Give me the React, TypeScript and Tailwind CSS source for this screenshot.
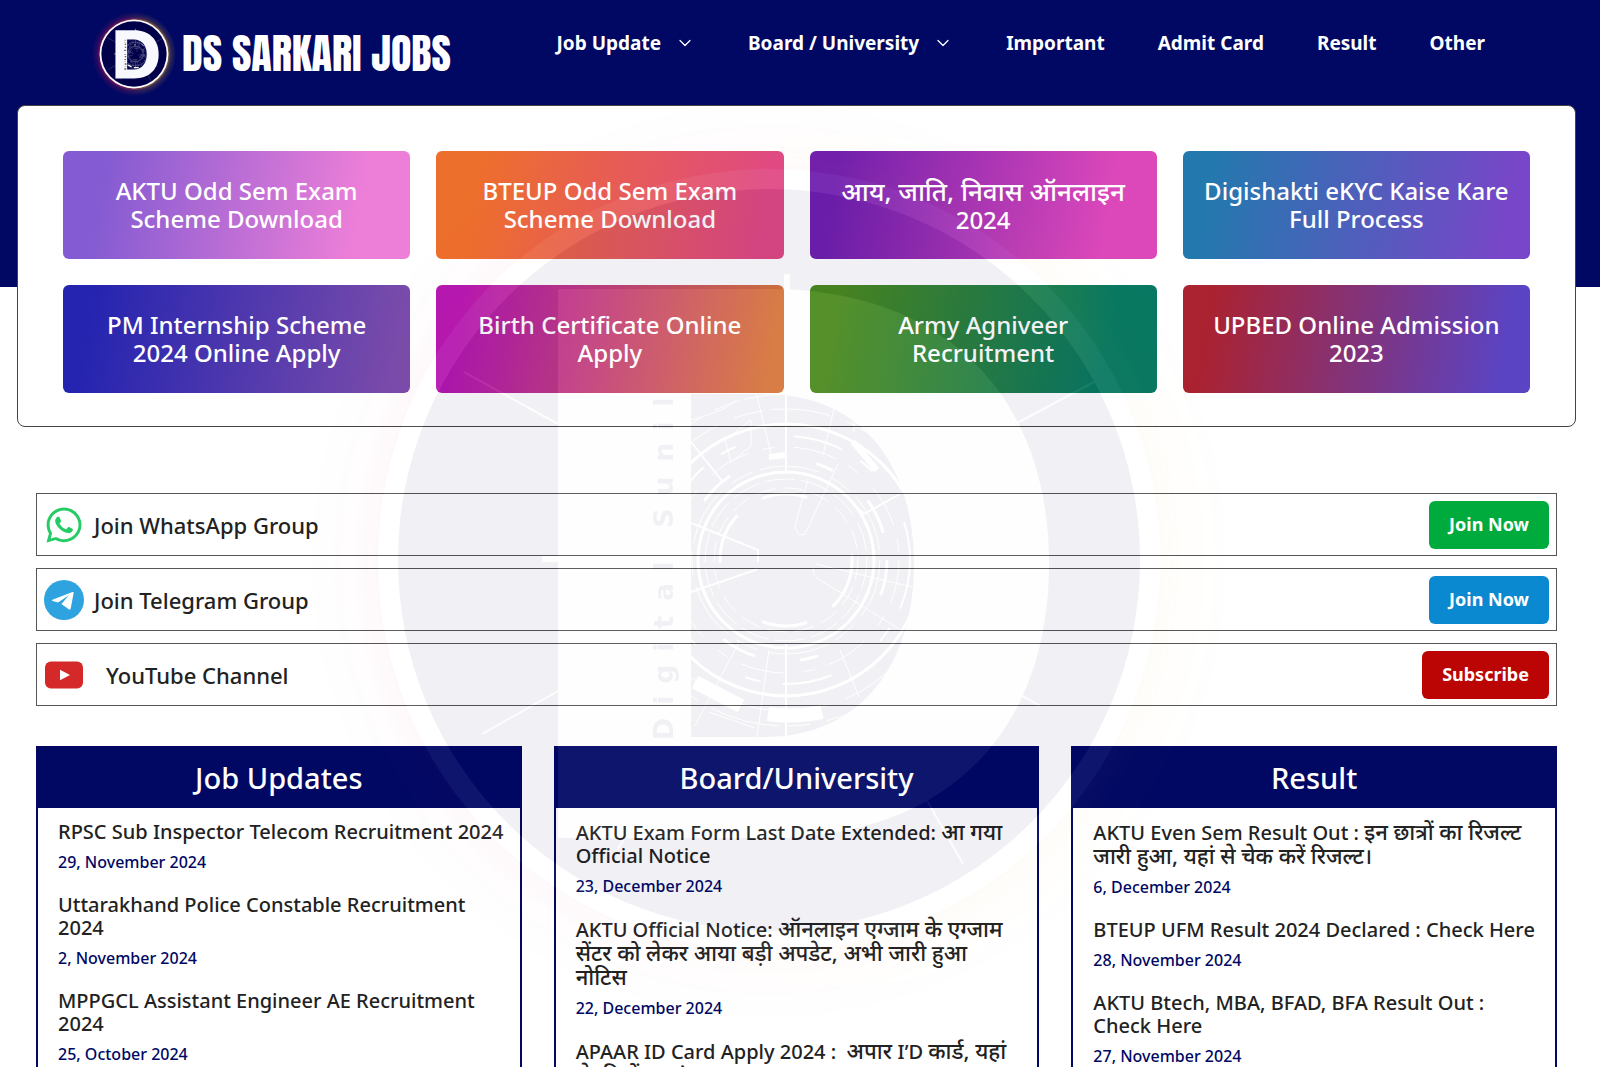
import { ChevronDown } from 'lucide-react';
import { FaWhatsapp } from 'react-icons/fa';

const navLinks = [
  { label: 'Job Update', hasMenu: true },
  { label: 'Board / University', hasMenu: true },
  { label: 'Important' },
  { label: 'Admit Card' },
  { label: 'Result' },
  { label: 'Other' },
];

const tiles = [
  { title: 'AKTU Odd Sem Exam Scheme Download', bg: 'bg-[linear-gradient(100deg,#845bd2_12%,#ee7fd8_85%)]' },
  { title: 'BTEUP Odd Sem Exam Scheme Download', bg: 'bg-[linear-gradient(100deg,#ed6f2c_12%,#e04a84_92%)]' },
  { title: 'आय, जाति, निवास ऑनलाइन 2024', bg: 'bg-[linear-gradient(100deg,#701fae_8%,#dc48ba_85%)]' },
  { title: 'Digishakti eKYC Kaise Kare Full Process', bg: 'bg-[linear-gradient(100deg,#2379ae_8%,#7846c8_92%)]' },
  { title: 'PM Internship Scheme 2024 Online Apply', bg: 'bg-[linear-gradient(100deg,#2424b0_8%,#7a4cab_95%)]' },
  { title: 'Birth Certificate Online Apply', bg: 'bg-[linear-gradient(100deg,#b518b0_8%,#d7763b_95%)]' },
  { title: 'Army Agniveer Recruitment', bg: 'bg-[linear-gradient(100deg,#4c8a1e_8%,#087862_85%)]' },
  { title: 'UPBED Online Admission 2023', bg: 'bg-[linear-gradient(100deg,#ab2230_8%,#5a44c4_92%)]' },
];

const columns = [
  {
    heading: 'Job Updates',
    posts: [
      { title: 'RPSC Sub Inspector Telecom Recruitment 2024', date: '29, November 2024' },
      { title: 'Uttarakhand Police Constable Recruitment 2024', date: '2, November 2024' },
      { title: 'MPPGCL Assistant Engineer AE Recruitment 2024', date: '25, October 2024' },
    ],
  },
  {
    heading: 'Board/University',
    posts: [
      { title: 'AKTU Exam Form Last Date Extended: आ गया Official Notice', date: '23, December 2024' },
      {
        title: 'AKTU Official Notice: ऑनलाइन एग्जाम के एग्जाम सेंटर को लेकर आया बड़ी अपडेट, अभी जारी हुआ नोटिस',
        date: '22, December 2024',
      },
      { title: 'APAAR ID Card Apply 2024 : \u00a0अपार I’D कार्ड, यहां से फ्री में बनाएं', date: '20, December 2024' },
    ],
  },
  {
    heading: 'Result',
    posts: [
      {
        title: 'AKTU Even Sem Result Out : इन छात्रों का रिजल्ट जारी हुआ, यहां से चेक करें रिजल्ट।',
        date: '6, December 2024',
      },
      { title: 'BTEUP UFM Result 2024 Declared : Check Here', date: '28, November 2024' },
      { title: 'AKTU Btech, MBA, BFAD, BFA Result Out : Check Here', date: '27, November 2024' },
    ],
  },
];

// Baseline position of each letter along the stem of the D
const stemLetters: [string, number][] = [
  ['D', 169],
  ['i', 140],
  ['g', 114],
  ['i', 87],
  ['t', 62],
  ['a', 32],
  ['l', 6],
  ['S', -42],
  ['u', -74],
  ['n', -108],
  ['i', -134],
  ['l', -158],
];

// Hindi runs are set slightly larger than the Latin text around them
function MixedText({ text, hindiClass }: { text: string; hindiClass: string }) {
  return text.split(/([\u0900-\u097F][\u0900-\u097F\s,]*)/).map((part, index) =>
    index % 2 === 1 ? (
      <span key={index} lang="hi" className={hindiClass}>
        {part}
      </span>
    ) : (
      part
    ),
  );
}

function LogoMark({ id, className }: { id: string; className: string }) {
  const glow = `${id}-glow`;
  const fade = `${id}-fade`;
  const mask = `${id}-mask`;
  const counter = `${id}-counter`;
  return (
    <svg viewBox="-500 -500 1000 1000" className={className} aria-hidden="true">
      <defs>
        <linearGradient id={glow} x1="0" y1="0" x2="1" y2="0">
          <stop offset="0" stopColor="#d4145a" />
          <stop offset="0.4" stopColor="#e8304a" />
          <stop offset="0.65" stopColor="#f0a020" />
          <stop offset="1" stopColor="#e8b020" />
        </linearGradient>
        <radialGradient id={fade}>
          <stop offset="0.77" stopColor="#fff" stopOpacity="0.9" />
          <stop offset="0.83" stopColor="#fff" stopOpacity="0.3" />
          <stop offset="0.96" stopColor="#fff" stopOpacity="0" />
        </radialGradient>
        <mask id={mask}>
          <circle r="500" fill={`url(#${fade})`} />
        </mask>
        <clipPath id={counter}>
          <path d="M-78-166H-5C95-166 145-92 145 4C145 100 95 177-5 177H-78Z" />
        </clipPath>
      </defs>
      <circle r="500" fill={`url(#${glow})`} mask={`url(#${mask})`} opacity="0.7" />
      <circle r="391" fill="#fff" />
      <circle r="371" fill="#00004a" />
      <path d="M-211-271H0C180-271 280-160 280 3C280 170 180 278 0 278H-211Z" fill="#f8f8ff" />
      <path d="M-78-166H-5C95-166 145-92 145 4C145 100 95 177-5 177H-78Z" fill="#00004a" />
      <g stroke="#fff" strokeWidth="2" opacity="0.9">
        <path d="M-287 174L-211 131M-305-188L-211-136M248-137L325-178M250 134L271 146M155 235L194 304M-144 278L-152 290" />
        <path d="M-227-1H-205M18-286V-260" strokeWidth="6" />
      </g>
      <g clipPath={`url(#${counter})`} stroke="#fff" fill="none">
        <circle cx="17" r="88" strokeWidth="3" />
        <circle cx="17" r="94" strokeWidth="1" strokeDasharray="60 12 24 8" />
        <circle cx="17" r="81" strokeWidth="1" strokeDasharray="30 6" />
        <circle cx="17" r="101" strokeWidth="3" strokeDasharray="36 90 18 46" />
        <circle cx="17" r="113" strokeWidth="1" strokeDasharray="44 14 12 20" />
        <circle cx="17" r="124" strokeWidth="2" strokeDasharray="50 22 16 60" />
        <circle cx="17" r="136" strokeWidth="3" />
        <circle cx="17" r="66" strokeWidth="3" strokeDasharray="52 30 46 76" />
        <circle cx="17" r="72" strokeWidth="1" strokeDasharray="20 8" />
        <circle cx="17" r="151" strokeWidth="1" strokeDasharray="60 18 30 8" />
        <circle cx="17" r="166" strokeWidth="1" strokeDasharray="26 6 70 16" />
        <path d="M17-172V-86M17 84V177M-11 2V-10L-78-37M-11 9L-78 32M-78-118L-46-78M95-46L131-66M95-46L91-50" strokeWidth="2" />
        <path d="M39-81L26-34Q29-22 36-26L69-96M54-105L70-172M47 4L143 27M44 8Q43 14 48 18L132 70M-30 82L-74 166M71 90L90 137M0 90L-12 177M-14-172L3-102" strokeWidth="1" />
        <path d="M-78-140Q-40-150-34-160M-44-120L-18-140V-114L-38-98ZM85-150V-128M-60 152L-14 168M-70 130L-32 148" strokeWidth="1" />
        <path d="M84-118L108-90M0-103L18-105" strokeWidth="6" />
        <path d="M-74 122L-28 146M-1 154Q26 158 53 152" strokeWidth="14" />
      </g>
      <g
        transform="rotate(-90)"
        fill="#00004a"
        fontSize="27"
        fontWeight="700"
        fontFamily="'DejaVu Sans', sans-serif"
        textAnchor="middle">
        {stemLetters.map(([letter, y]) => (
          <text key={y} x={-y} y="-96">
            {letter}
          </text>
        ))}
      </g>
    </svg>
  );
}

function TelegramIcon() {
  return (
    <svg viewBox="0 0 40 40" className="size-10" aria-hidden="true">
      <circle cx="20" cy="20" r="20" fill="#2ea3e0" />
      <path d="M8.4 19.8L28.4 12Q29.9 11.600 29.600 13.200L26.700 28.600Q26.300 30.300 24.800 29.300L17.400 23.900L25 15.300L14 22.400L8.600 20.900Q7.400 20.300 8.400 19.800Z" fill="#fff" />
    </svg>
  );
}

function YouTubeIcon() {
  return (
    <svg viewBox="0 0 40 40" className="size-10" aria-hidden="true">
      <rect x="1" y="6.500" width="38" height="27" rx="6" fill="#d52828" />
      <path d="M16 14.700V25.300L26 20Z" fill="#fff" />
    </svg>
  );
}

const channels = [
  {
    label: 'Join WhatsApp Group',
    action: 'Join Now',
    button: 'bg-[#00ab3d]',
    spacing: 'ml-[10px]',
    icon: <FaWhatsapp className="size-10 text-[#25cc66]" aria-hidden="true" />,
  },
  { label: 'Join Telegram Group', action: 'Join Now', button: 'bg-[#0a89d0]', spacing: 'ml-[10px]', icon: <TelegramIcon /> },
  { label: 'YouTube Channel', action: 'Subscribe', button: 'bg-[#bb0504]', spacing: 'ml-[22px]', icon: <YouTubeIcon /> },
];

export default function App() {
  return (
    <div className="relative overflow-hidden bg-white font-['Noto_Sans','Open_Sans',sans-serif] text-[#222]">
      <header className="bg-[#000864] pb-[182px]">
        <div className="flex h-[105px] items-start justify-between pr-[115px] pl-[90px]">
          <a href="#" className="flex items-center pt-[10px]">
            <LogoMark id="brand" className="size-[88px]" />
            <span className="ml-1 font-['Anton','Impact',sans-serif] text-[42px] leading-none whitespace-nowrap text-white">
              DS SARKARI JOBS
            </span>
          </a>
          <nav className="flex gap-[53px] pt-7">
            {navLinks.map((link) => (
              <a
                key={link.label}
                href="#"
                className="flex items-center gap-[14px] text-[19px] leading-[30px] font-bold whitespace-nowrap text-white">
                {link.label}
                {link.hasMenu && <ChevronDown className="size-5" strokeWidth={1.5} />}
              </a>
            ))}
          </nav>
        </div>
      </header>

      <main>
        <section className="mr-6 -mt-[182px] ml-[17px] rounded-lg border border-[#444] bg-white px-[45px] pt-[45px] pb-[33px]">
          <div className="grid grid-cols-4 gap-[26px]">
            {tiles.map((tile) => (
              <a
                key={tile.title}
                href="#"
                className={`flex h-[108px] items-center justify-center rounded-md px-4 text-center text-[24px] leading-7 font-medium text-white ${tile.bg}`}>
                <span>
                  <MixedText text={tile.title} hindiClass="text-[26px]" />
                </span>
              </a>
            ))}
          </div>
        </section>

        <section className="mt-[66px] mr-[43px] ml-[36px] space-y-3">
          {channels.map((channel) => (
            <div key={channel.label} className="flex h-[63px] items-center border border-[#555] px-[7px]">
              {channel.icon}
              <p className={`text-[22px] leading-7 font-medium ${channel.spacing}`}>{channel.label}</p>
              <button
                type="button"
                className={`ml-auto h-12 rounded-md px-5 text-[18px] font-bold text-white ${channel.button}`}>
                {channel.action}
              </button>
            </div>
          ))}
        </section>

        <section className="mt-10 mr-[43px] ml-[36px] grid h-[321px] grid-cols-3 gap-8">
          {columns.map((column) => (
            <div key={column.heading} className="h-[600px] border-2 border-[#000864]">
              <h2 className="bg-[#000864] text-center text-[29px] leading-[60px] font-medium text-white">
                {column.heading}
              </h2>
              <ul className="pt-3 pr-[14px] pl-5">
                {column.posts.map((post) => (
                  <li key={post.title} className="mb-[19px]">
                    <a href="#" className="block text-[20px] leading-[23px] font-medium">
                      <MixedText text={post.title} hindiClass="text-[22px]" />
                    </a>
                    <time className="mt-[7px] block text-[16px] leading-6 font-medium text-[#000864]">{post.date}</time>
                  </li>
                ))}
              </ul>
            </div>
          ))}
        </section>
      </main>

      <LogoMark id="watermark" className="pointer-events-none absolute top-[60px] left-[269px] size-[1000px] opacity-5" />
    </div>
  );
}
